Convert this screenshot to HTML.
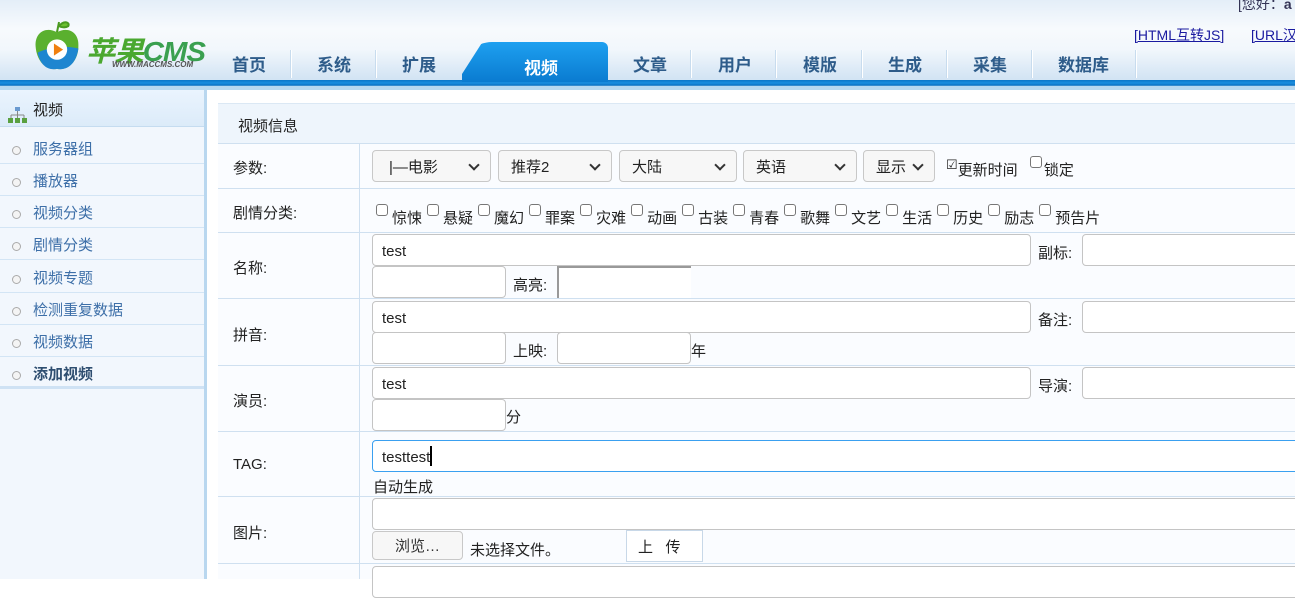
<!DOCTYPE html>
<html><head><meta charset="utf-8"><style>
*{box-sizing:border-box;margin:0;padding:0}
body{width:1295px;height:579px;overflow:hidden;background:#fff;font-family:"Liberation Sans","Noto Sans CJK SC",sans-serif;font-size:15px;color:#222;position:relative}
.abs{position:absolute;white-space:nowrap}
#hdr{left:0;top:0;width:1295px;height:82px;background:linear-gradient(#e4eef8 0%,#f7fafd 35%,#f2f7fc 60%,#cfe2f3 100%)}
#bar{left:0;top:80px;width:1295px;height:10px;background:linear-gradient(#0a76c8 0,#1a8ee0 30%,#0a6fc0 55%,#b8d8f0 60%,#b8d8f0 100%)}
.nav{top:51px;font-size:17px;font-weight:bold;color:#2e5c8a}
.sep{top:50px;width:1px;height:28px;background:#c8dcee;box-shadow:1px 0 0 #fff}
#tab{left:462px;top:42px;width:146px;height:40px;background:linear-gradient(#1ea0f0,#0a7bd0);border-radius:30px 6px 0 0;clip-path:polygon(14% 0,100% 0,100% 100%,0 100%,0 80%)}
#side{left:0;top:90px;width:207px;height:489px;background:#f2f7fd;border-right:3px solid #b9d7ef}
.si{position:absolute;left:0;width:204px;height:32px;border-bottom:1px solid #d3e5f5;color:#3d6fa8;font-size:15px;line-height:36px;padding-left:33px}
.si:before{content:"";position:absolute;left:12px;top:14px;width:7px;height:7px;border:1px solid #aaa;border-radius:50%;background:#f4f4f4}
#main{left:218px;top:103px;width:1077px;height:476px;background:#fafcff}
.hl{position:absolute;left:218px;width:1077px;height:1px;background:#cfe0f0}
.lbl{position:absolute;left:233px;font-size:15px}
.inp{position:absolute;height:32px;background:#fff;border:1px solid #c4c4c4;border-radius:4px;font-size:15px;line-height:33px;padding-left:9px}
.sel{position:absolute;top:150px;height:32px;background:#f7f7f7;border:1px solid #c8c8c8;border-radius:4px;font-size:15px;line-height:34px;padding-left:12px}
.sel:after{content:"";position:absolute;right:12px;top:10px;width:6px;height:6px;border-right:2px solid #333;border-bottom:2px solid #333;transform:rotate(45deg)}
.cb{display:inline-block;width:12px;height:12px;border:1px solid #777;border-radius:3px;background:#fff;margin:0 4px 0 5px;vertical-align:7px}
</style></head><body>
<div id="hdr" class="abs"></div>
<div id="bar" class="abs"></div>
<svg class="abs" style="left:30px;top:18px" width="54" height="56" viewBox="0 0 50 55">
<path d="M25 14 C14 8 3 14 4 28 C5 42 14 52 25 50 C36 52 46 42 46 28 C47 14 36 8 25 14Z" fill="#5ab02e"/>
<path d="M6 34 C14 30 30 26 46 30 C44 44 36 52 25 50 C14 52 8 44 6 34Z" fill="#1e86d0"/>
<circle cx="25" cy="31" r="10" fill="#fff"/><path d="M22 25 L31 31 L22 37Z" fill="#f08010"/>
<path d="M25 14 L27 4 M27 8 C32 2 38 4 36 8 C33 10 29 9 27 8Z" stroke="#4a9a20" stroke-width="2" fill="#6cc030"/></svg>
<div class="abs" style="left:86px;top:30px;font-size:28px;font-weight:bold;font-style:italic;color:#4aa830;letter-spacing:-1px;transform:scaleX(1.05);transform-origin:left">苹果<span style="color:#3aa050">CMS</span></div>
<div class="abs" style="left:112px;top:60px;font-size:8px;font-weight:bold;font-style:italic;color:#555">WWW.MACCMS.COM</div>
<div id="tab" class="abs"></div>
<div class="abs nav" style="left:232px">首页</div><div class="abs sep" style="left:290px"></div>
<div class="abs nav" style="left:317px">系统</div><div class="abs sep" style="left:375px"></div>
<div class="abs nav" style="left:402px">扩展</div>
<div class="abs nav" style="left:524px;top:54px;color:#fff">视频</div>
<div class="abs nav" style="left:633px">文章</div><div class="abs sep" style="left:690px"></div>
<div class="abs nav" style="left:718px">用户</div><div class="abs sep" style="left:775px"></div>
<div class="abs nav" style="left:803px">模版</div><div class="abs sep" style="left:861px"></div>
<div class="abs nav" style="left:888px">生成</div><div class="abs sep" style="left:946px"></div>
<div class="abs nav" style="left:973px">采集</div><div class="abs sep" style="left:1031px"></div>
<div class="abs nav" style="left:1058px">数据库</div><div class="abs sep" style="left:1135px"></div>
<div class="abs" style="left:1238px;top:-6px;font-size:14px;color:#335">[您好：<b>a</b></div>
<div class="abs" style="left:1134px;top:25px;font-size:14px;color:#1a1aa0;text-decoration:underline">[HTML互转JS]</div>
<div class="abs" style="left:1251px;top:25px;font-size:14px;color:#1a1aa0;text-decoration:underline">[URL汉</div>
<div id="side" class="abs">
<div style="position:absolute;left:0;top:0;width:204px;height:37px;background:linear-gradient(#eaf4fe,#dcebf9);border-bottom:1px solid #c5dcf0;font-size:15px;line-height:42px;padding-left:33px;color:#222">视频</div>
<svg style="position:absolute;left:8px;top:16px" width="19" height="18"><rect x="7" y="1" width="5" height="4" fill="#6a9ad0"/><path d="M9.5 5v4M3 9h13M3 9v3M9.5 9v3M16 9v3" stroke="#888" fill="none"/><rect x="0" y="12" width="5" height="5" fill="#5aa040"/><rect x="7" y="12" width="5" height="5" fill="#5aa040"/><rect x="14" y="12" width="5" height="5" fill="#5aa040"/></svg>
<div class="si" style="top:42px">服务器组</div>
<div class="si" style="top:74px">播放器</div>
<div class="si" style="top:106px">视频分类</div>
<div class="si" style="top:138px">剧情分类</div>
<div class="si" style="top:171px">视频专题</div>
<div class="si" style="top:203px">检测重复数据</div>
<div class="si" style="top:235px">视频数据</div>
<div class="si" style="top:267px;font-weight:bold;color:#2e4e70;border-bottom:3px solid #cfe2f4">添加视频</div>
</div>
<div id="main" class="abs"></div>
<div class="abs" style="left:218px;top:103px;width:1077px;height:40px;background:#eef5fc;border-top:1px solid #dbe8f4"></div>
<div class="abs" style="left:238px;top:115px;font-size:15px">视频信息</div>
<div class="hl" style="top:143px"></div><div class="hl" style="top:188px"></div><div class="hl" style="top:232px"></div>
<div class="hl" style="top:298px"></div><div class="hl" style="top:365px"></div><div class="hl" style="top:431px"></div>
<div class="hl" style="top:496px"></div><div class="hl" style="top:563px"></div>
<div class="abs" style="left:359px;top:143px;width:1px;height:436px;background:#cfe0f0"></div>
<div class="lbl" style="top:157px">参数:</div>
<div class="lbl" style="top:202px">剧情分类:</div>
<div class="lbl" style="top:257px">名称:</div>
<div class="lbl" style="top:324px">拼音:</div>
<div class="lbl" style="top:390px">演员:</div>
<div class="lbl" style="top:456px">TAG:</div>
<div class="lbl" style="top:522px">图片:</div>
<div class="sel" style="left:372px;width:119px;padding-left:16px">|—电影</div>
<div class="sel" style="left:498px;width:114px">推荐2</div>
<div class="sel" style="left:619px;width:118px">大陆</div>
<div class="sel" style="left:743px;width:114px">英语</div>
<div class="sel" style="left:863px;width:72px">显示</div>
<div class="abs" style="left:946px;top:156px;font-size:15px"><span style="font-size:13px;vertical-align:6px">☑</span>更新时间 <span class="cb" style="margin-left:8px;margin-right:2px"></span>锁定</div>
<div class="abs" style="left:371px;top:204px;font-size:15px;white-space:nowrap"><span class="cb"></span>惊悚<span class="cb"></span>悬疑<span class="cb"></span>魔幻<span class="cb"></span>罪案<span class="cb"></span>灾难<span class="cb"></span>动画<span class="cb"></span>古装<span class="cb"></span>青春<span class="cb"></span>歌舞<span class="cb"></span>文艺<span class="cb"></span>生活<span class="cb"></span>历史<span class="cb"></span>励志<span class="cb"></span>预告片</div>
<div class="inp" style="left:372px;top:234px;width:659px">test</div>
<div class="abs" style="left:1038px;top:242px">副标:</div>
<div class="inp" style="left:1082px;top:234px;width:220px"></div>
<div class="inp" style="left:372px;top:266px;width:134px"></div>
<div class="abs" style="left:513px;top:274px">高亮:</div>
<div class="abs" style="left:557px;top:266px;width:134px;height:32px;background:#fff;border-left:2px solid #999;border-top:2px solid #999"></div>
<div class="inp" style="left:372px;top:301px;width:659px">test</div>
<div class="abs" style="left:1038px;top:309px">备注:</div>
<div class="inp" style="left:1082px;top:301px;width:220px"></div>
<div class="inp" style="left:372px;top:332px;width:134px"></div>
<div class="abs" style="left:513px;top:340px">上映:</div>
<div class="inp" style="left:557px;top:332px;width:134px"></div>
<div class="abs" style="left:691px;top:340px">年</div>
<div class="inp" style="left:372px;top:367px;width:659px">test</div>
<div class="abs" style="left:1038px;top:375px">导演:</div>
<div class="inp" style="left:1082px;top:367px;width:220px"></div>
<div class="inp" style="left:372px;top:399px;width:134px"></div>
<div class="abs" style="left:506px;top:406px">分</div>
<div class="inp" style="left:372px;top:440px;width:930px;border-color:#3aa0f0">testtest<span style="display:inline-block;width:2px;height:20px;background:#000;vertical-align:-4px"></span></div>
<div class="abs" style="left:373px;top:476px">自动生成</div>
<div class="inp" style="left:372px;top:498px;width:930px"></div>
<div class="abs" style="left:372px;top:531px;width:91px;height:29px;background:#f7f7f7;border:1px solid #c8c8c8;border-radius:4px;text-align:center;line-height:30px;color:#333">浏览…</div>
<div class="abs" style="left:470px;top:539px">未选择文件。</div>
<div class="abs" style="left:626px;top:530px;width:77px;height:32px;background:#fff;border:1px solid #c8d8e8;line-height:33px;padding-left:11px">上&nbsp;&nbsp;&nbsp;传</div>
<div class="inp" style="left:372px;top:566px;width:930px"></div>
</body></html>
